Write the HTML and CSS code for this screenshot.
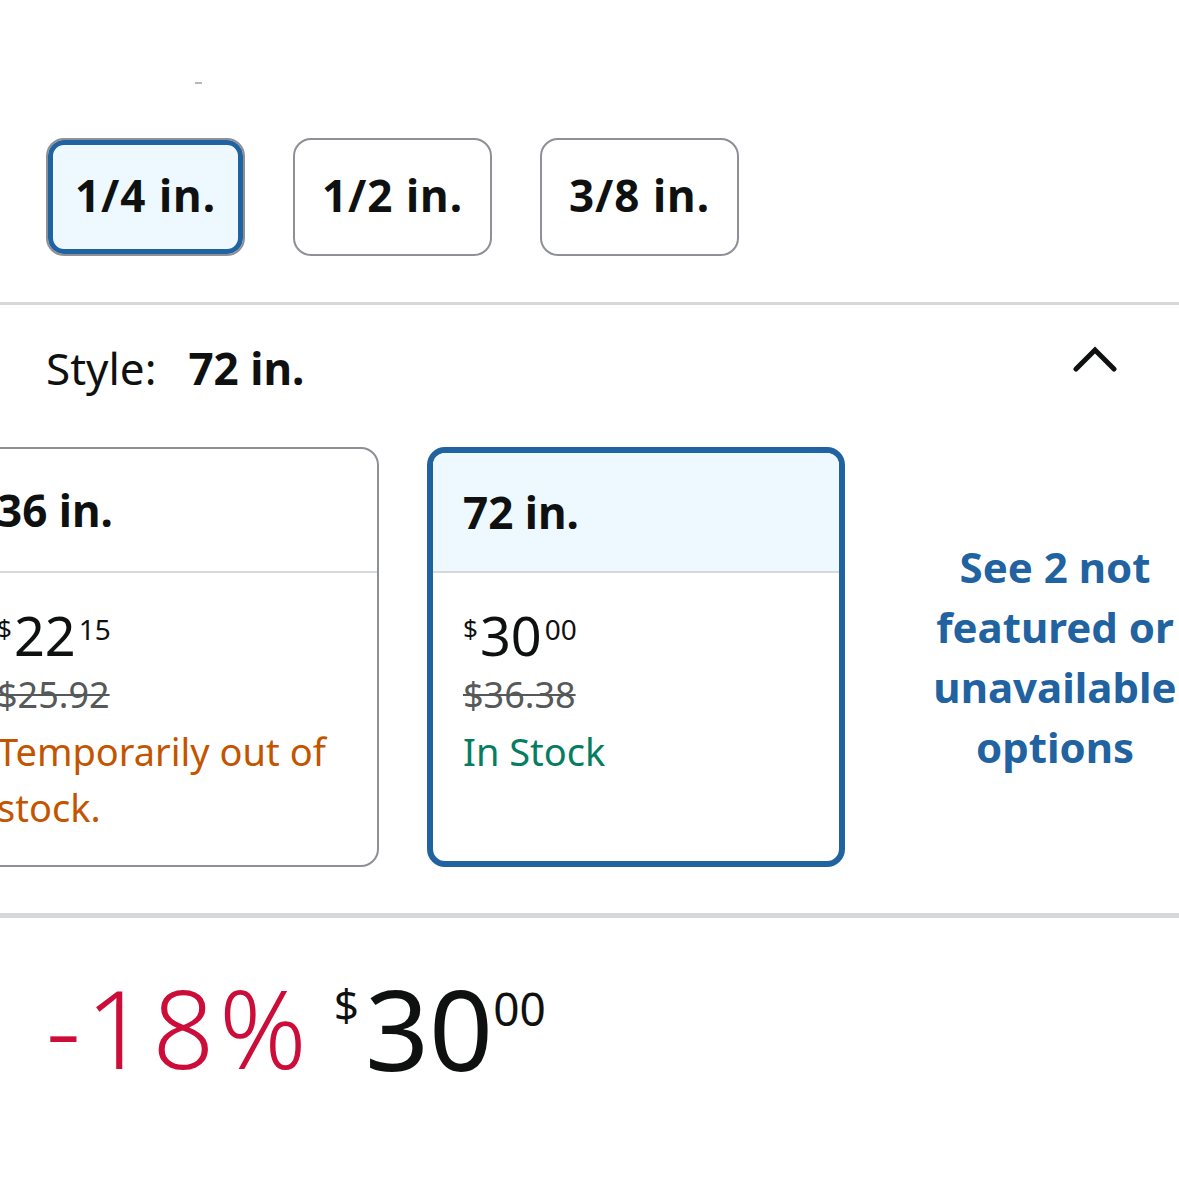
FILE: index.html
```html
<!DOCTYPE html>
<html>
<head>
<meta charset="utf-8">
<link rel="stylesheet" href="styles.css">
</head>
<body>
<div class="page">
  <div class="top"><div class="mark"></div></div>
  <div class="sizes">
    <div class="size sel">1/4 in.</div>
    <div class="size">1/2 in.</div>
    <div class="size">3/8 in.</div>
  </div>
  <div class="rule"></div>
  <div class="style-head">
    <div class="style-label">Style:<b>72 in.</b></div>
    <svg class="chev" width="44" height="28" viewBox="0 0 44 28"><polyline points="3,25 22,6 41,25" fill="none" stroke="#0F1111" stroke-width="5" stroke-linecap="round" stroke-linejoin="miter"/></svg>
  </div>
  <div class="cards">
    <div class="card">
      <div class="card-head">36 in.</div>
      <div class="card-body">
        <div class="price"><span class="cur">$</span><span class="whole">22</span><span class="frac">15</span></div>
        <div class="strike">$25.92</div>
        <div class="status oos">Temporarily out of stock.</div>
      </div>
    </div>
    <div class="card sel">
      <div class="card-head">72 in.</div>
      <div class="card-body">
        <div class="price"><span class="cur">$</span><span class="whole">30</span><span class="frac">00</span></div>
        <div class="strike">$36.38</div>
        <div class="status instock">In Stock</div>
      </div>
    </div>
    <div class="more">See 2 not featured or unavailable options</div>
  </div>
  <div class="rule thick"></div>
  <div class="deal">
    <span class="pct">-18%</span>
    <span class="dcur">$</span><span class="dwhole">30</span><span class="dfrac">00</span>
  </div>
</div>
</body>
</html>
```
FILE: styles.css
```css
html, body {
  margin: 0;
  padding: 0;
  background: #ffffff;
}
body {
  width: 1179px;
  height: 1179px;
  overflow: hidden;
  font-family: "Noto Sans", "Open Sans", sans-serif;
  color: #0F1111;
}
.page {
  width: 1179px;
}
.top {
  height: 138px;
  box-sizing: border-box;
  padding-top: 82px;
}
.mark {
  margin-left: 195px;
  width: 7px;
  height: 2px;
  background: #b8b8b8;
}
.sizes {
  display: flex;
  gap: 48px;
  padding-left: 46px;
}
.size {
  width: 199px;
  height: 118px;
  box-sizing: border-box;
  border: 2px solid #8D9096;
  border-radius: 18px;
  display: flex;
  align-items: center;
  justify-content: center;
  font-weight: 700;
  font-size: 44px;
  letter-spacing: 1px;
  padding-bottom: 4px;
  background: #fff;
}
.size.sel {
  background: #EDF8FF;
  box-shadow: inset 0 0 0 5px #2162A1;
}
.rule {
  height: 3px;
  background: #D5D9D9;
  margin-top: 46px;
}
.rule.thick {
  height: 5px;
  margin-top: 46px;
}
.style-head {
  height: 130px;
  display: flex;
  align-items: center;
  justify-content: space-between;
  padding: 0 62px 0 46px;
}
.style-label {
  font-size: 44px;
  margin-top: -4px;
}
.style-label b {
  font-weight: 700;
  margin-left: 32px;
}
.chev {
  display: block;
  margin-top: -24px;
}
.cards {
  display: flex;
  gap: 48px;
  margin-left: -39px;
  margin-top: 12px;
  align-items: center;
}
.card {
  flex-shrink: 0;
  width: 418px;
  height: 420px;
  box-sizing: border-box;
  border: 2px solid #8D9096;
  border-radius: 18px;
  overflow: hidden;
  background: #fff;
}
.card.sel {
  border: 6px solid #2162A1;
}
.card-head {
  height: 124px;
  box-sizing: border-box;
  border-bottom: 2px solid #D5D9D9;
  display: flex;
  align-items: center;
  padding-left: 34px;
  font-size: 44px;
  font-weight: 700;
}
.card.sel .card-head {
  height: 120px;
  padding-left: 30px;
  background: #EDF8FF;
}
.card-body {
  padding: 34px 20px 0 34px;
}
.card.sel .card-body {
  padding-left: 30px;
}
.price {
  display: flex;
  align-items: flex-start;
  height: 62px;
}
.cur {
  font-size: 26px;
  line-height: 26px;
  margin-top: 8px;
  margin-right: 2px;
}
.whole {
  font-size: 54px;
  line-height: 56px;
}
.frac {
  font-size: 28px;
  line-height: 28px;
  margin-top: 8px;
  margin-left: 3px;
}
.strike {
  font-size: 36px;
  line-height: 52px;
  color: #565959;
  text-decoration: line-through;
  text-decoration-thickness: 2px;
}
.status {
  font-size: 38px;
  line-height: 56px;
  margin-top: 2px;
}
.oos {
  color: #C45500;
}
.instock {
  color: #067D62;
}
.more {
  flex-shrink: 0;
  width: 324px;
  text-align: center;
  color: #2162A1;
  font-weight: 700;
  font-size: 42px;
  line-height: 60px;
}
.deal {
  display: flex;
  align-items: flex-start;
  padding-left: 46px;
  margin-top: 56px;
}
.pct {
  font-size: 108px;
  line-height: 108px;
  font-weight: 300;
  letter-spacing: 5px;
  color: #CC0C39;
  margin-right: 22px;
}
.dcur {
  font-size: 44px;
  line-height: 44px;
  margin-top: 8px;
  margin-right: 6px;
}
.dwhole {
  font-size: 112px;
  line-height: 108px;
}
.dfrac {
  font-size: 46px;
  line-height: 46px;
  margin-top: 11px;
  margin-left: 0;
}
```
